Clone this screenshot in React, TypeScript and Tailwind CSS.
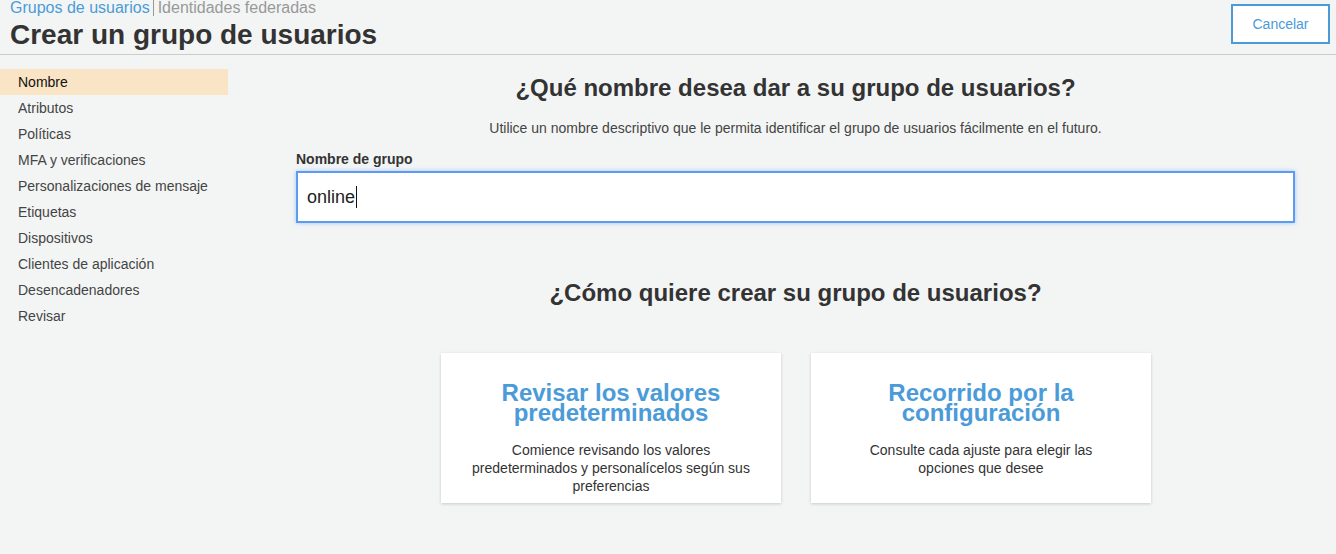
import React from 'react';

const steps = [
  'Nombre',
  'Atributos',
  'Políticas',
  'MFA y verificaciones',
  'Personalizaciones de mensaje',
  'Etiquetas',
  'Dispositivos',
  'Clientes de aplicación',
  'Desencadenadores',
  'Revisar',
];

function OptionCard({ title, text }: { title: string[]; text: React.ReactNode }) {
  return (
    <div className="w-[340px] h-[150px] bg-white shadow-[0_1px_3px_rgba(0,0,0,0.18)] flex flex-col items-center pt-[30px] px-[20px] text-center">
      <h3 className="text-[24px] leading-[20px] font-bold text-[#4a9bd8]">
        {title.map((line) => (
          <span key={line} className="block h-[20px]">{line}</span>
        ))}
      </h3>
      <p className="mt-[18px] text-[14px] leading-[18px] text-[#333]">{text}</p>
    </div>
  );
}

export default function App() {
  return (
    <div className="min-h-[554px] bg-[#f3f5f5] font-['Liberation_Sans',Arial,sans-serif] text-[#333]">
      {/* Header */}
      <div className="flex justify-between border-b border-[#cccccc] h-[55px]">
        <div className="pl-[10px]">
          <div className="flex items-center text-[16px] leading-[16px] mt-[-1px]">
            <span className="text-[#4a9bd8]">Grupos de usuarios</span>
            <span className="w-px h-[17px] bg-[#999] ml-[3px] mr-[4px]"></span>
            <span className="text-[#999]">Identidades federadas</span>
          </div>
          <h1 className="text-[28px] leading-[30px] font-bold text-[#333] mt-[4px]">
            Crear un grupo de usuarios
          </h1>
        </div>
        <div className="pr-[6px] pt-[4px]">
          <button className="w-[99px] h-[40px] bg-white border-2 border-[#4a9bd8] text-[#4a9bd8] text-[14px]">
            Cancelar
          </button>
        </div>
      </div>

      <div className="flex">
        {/* Sidebar */}
        <nav className="w-[228px] pt-[14px]">
          {steps.map((s, i) => (
            <div
              key={s}
              className={`h-[26px] flex items-center pl-[18px] text-[14px] ${
                i === 0 ? 'bg-[#f9e5c5] text-[#111]' : 'text-[#444]'
              }`}
            >
              {s}
            </div>
          ))}
        </nav>

        {/* Main */}
        <main className="ml-[68px] w-[999px]">
          <h2 className="mt-[19px] text-center text-[24px] leading-[28px] font-bold text-[#333]">
            ¿Qué nombre desea dar a su grupo de usuarios?
          </h2>
          <p className="mt-[18px] text-center text-[14px] leading-[16px] text-[#444]">
            Utilice un nombre descriptivo que le permita identificar el grupo de usuarios fácilmente en el futuro.
          </p>
          <label className="block mt-[15px] text-[14px] leading-[16px] font-bold text-[#333]">
            Nombre de grupo
          </label>
          <div className="mt-[4px] h-[52px] bg-white border-2 border-[#5b9cf0] shadow-[0_0_4px_rgba(77,144,254,0.5)] flex items-center pl-[9px] text-[18px] text-[#222]">
            online
            <span className="w-px h-[22px] bg-[#111] ml-[1px]"></span>
          </div>

          <h2 className="mt-[56px] text-center text-[24px] leading-[28px] font-bold text-[#333]">
            ¿Cómo quiere crear su grupo de usuarios?
          </h2>

          <div className="mt-[46px] flex justify-center gap-[30px] pl-[1px]">
            <OptionCard
              title={['Revisar los valores', 'predeterminados']}
              text={<>Comience revisando los valores<br />predeterminados y personalícelos según sus<br />preferencias</>}
            />
            <OptionCard
              title={['Recorrido por la', 'configuración']}
              text={<>Consulte cada ajuste para elegir las<br />opciones que desee</>}
            />
          </div>
        </main>
      </div>
    </div>
  );
}
